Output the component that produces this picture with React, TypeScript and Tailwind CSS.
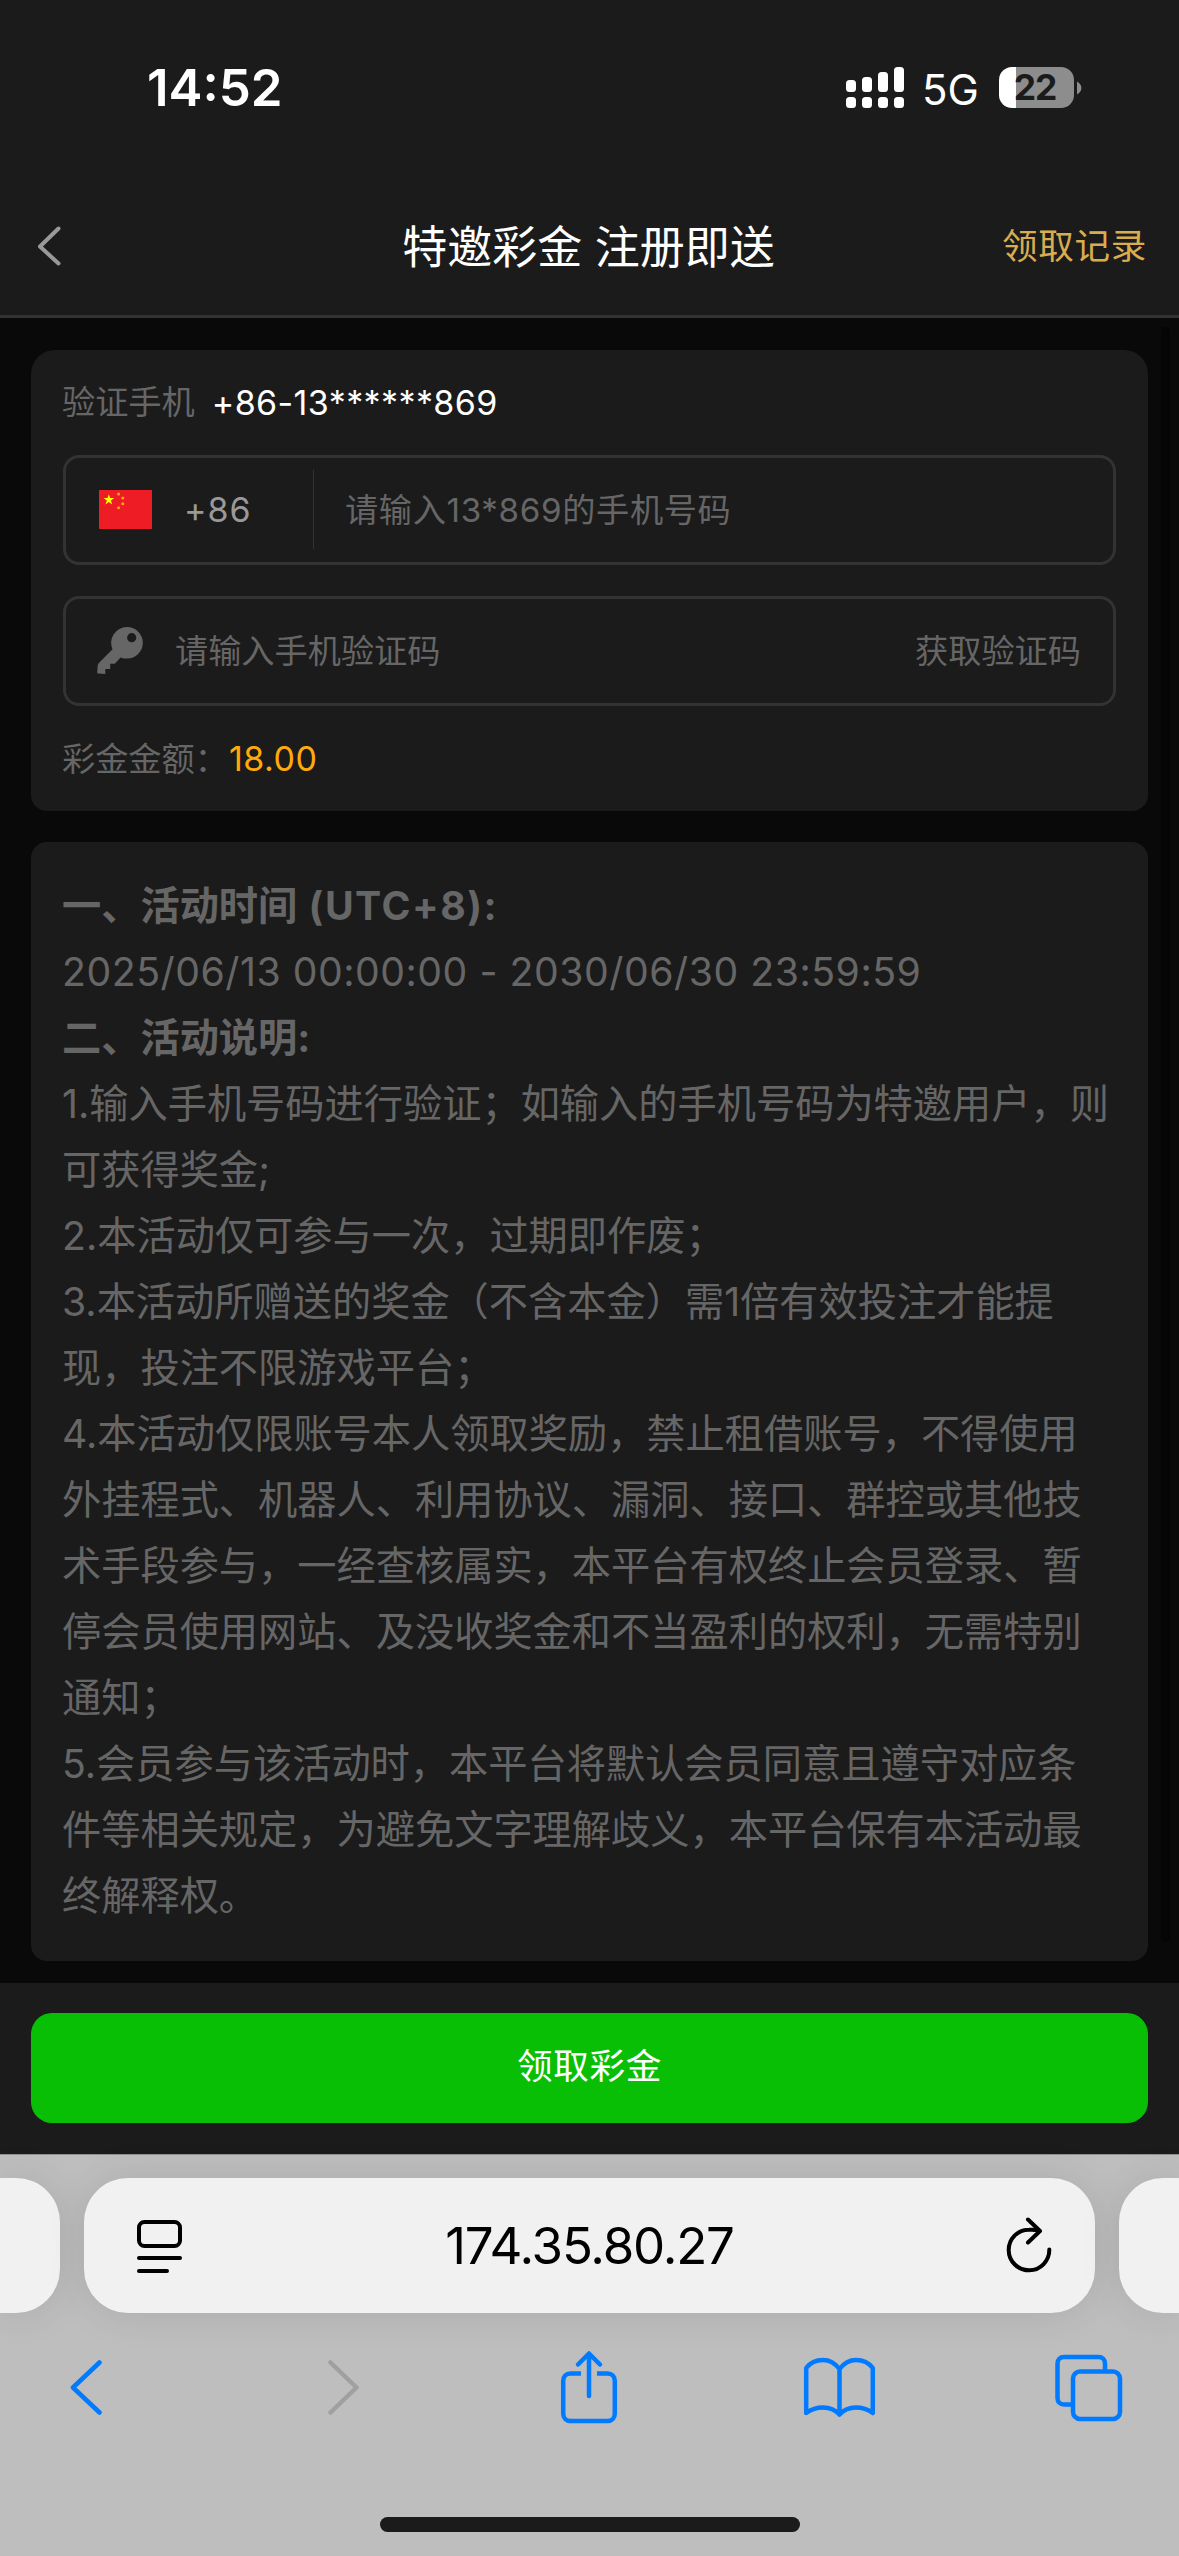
import type { ReactNode } from "react";

const rules = [
  "1.输入手机号码进行验证；如输入的手机号码为特邀用户，则可获得奖金;",
  "2.本活动仅可参与一次，过期即作废；",
  "3.本活动所赠送的奖金（不含本金）需1倍有效投注才能提现，投注不限游戏平台；",
  "4.本活动仅限账号本人领取奖励，禁止租借账号，不得使用外挂程式、机器人、利用协议、漏洞、接口、群控或其他技术手段参与，一经查核属实，本平台有权终止会员登录、暂停会员使用网站、及没收奖金和不当盈利的权利，无需特别通知；",
  "5.会员参与该活动时，本平台将默认会员同意且遵守对应条件等相关规定，为避免文字理解歧义，本平台保有本活动最终解释权。",
];

function StatusBar() {
  return (
    <div className="flex h-[177px] items-start justify-between pr-[97px] pl-[147px]">
      <span className="mt-[58px] text-[51px] leading-[60px] font-semibold text-white">14:52</span>
      <div className="mt-[67px] flex h-[41px] items-center">
        <svg width="58" height="41" viewBox="0 0 58 41" fill="#fff">
          <rect x="0" y="13" width="10" height="12" rx="3.5" />
          <rect x="16" y="10" width="10" height="15" rx="3.5" />
          <rect x="32" y="5" width="10" height="20" rx="3.5" />
          <rect x="48" y="0" width="10" height="25" rx="3.5" />
          <rect x="0" y="30" width="10" height="11" rx="3.5" />
          <rect x="16" y="30" width="10" height="11" rx="3.5" />
          <rect x="32" y="30" width="10" height="11" rx="3.5" />
          <rect x="48" y="30" width="10" height="11" rx="3.5" />
        </svg>
        <span className="mt-[4px] ml-[18px] w-[77px] text-[42px] leading-[50px] text-white">5G</span>
        <div className="flex h-[41px] w-[75px] items-center justify-center rounded-[13px] bg-[linear-gradient(90deg,#fff_17px,#8d8d8d_17px)] pr-[3px] text-[35.5px] leading-[41px] font-bold tracking-[-1px] text-[#1b1b1b]">
          22
        </div>
        <svg className="ml-[3px]" width="5" height="14" viewBox="0 0 5 14" fill="#8d8d8d">
          <path d="M0 0.5C2.6 1.8 4.4 4.2 4.4 7S2.6 12.2 0 13.5Z" />
        </svg>
      </div>
    </div>
  );
}

function NavBar() {
  return (
    <div className="flex h-[141px] items-center justify-between border-b-[3px] border-[#333] pr-[35px] pl-[37px]">
      <div className="w-[138px]">
        <svg width="24" height="42" viewBox="0 0 24 42" fill="none" stroke="#999" strokeWidth="4" strokeLinecap="round" strokeLinejoin="round">
          <path d="M21.5 3.5L3 21.5L21.5 38.5" />
        </svg>
      </div>
      <h1 className="pt-[3px] text-[45px] leading-[60px] text-white">特邀彩金 注册即送</h1>
      <span className="w-[142px] pt-[1px] text-[35.6px] leading-[50px] tracking-[0.7px] whitespace-nowrap text-[#d9ad4f]">领取记录</span>
    </div>
  );
}

function ChinaFlag() {
  return (
    <svg width="53" height="39" viewBox="0 0 53 39">
      <rect width="53" height="39" fill="#ee1c25" />
      <path fill="#ff0" d="M9.8 4.2l1.3 3.9h4.1l-3.3 2.4 1.3 3.9-3.4-2.4-3.3 2.4 1.3-3.9-3.3-2.4h4z" />
      <g fill="#f5a80f">
        <circle cx="19.6" cy="4" r="1.5" />
        <circle cx="23.8" cy="8" r="1.5" />
        <circle cx="23.8" cy="13.7" r="1.5" />
        <circle cx="19.6" cy="17.7" r="1.5" />
      </g>
    </svg>
  );
}

function KeyIcon() {
  return (
    <svg width="46" height="48" viewBox="0 0 46 48" fill="#666">
      <path
        fillRule="evenodd"
        d="M30 0A15.8 15.8 0 0 1 30 31.6C27.600 31.600 25.400 31.200 23.500 30.400L17.800 36.800H13.200V42H8.300V47L1.500 46.600C0.600 46.600 0.200 46 0.200 45.200L0.700 38.500C0.800 37.400 1.200 36.700 1.900 36L15.500 22.200A15.800 15.800 0 0 1 30 0ZM34.700 6.100A4.600 4.600 0 1 0 34.700 15.300A4.600 4.600 0 1 0 34.700 6.100Z"
      />
    </svg>
  );
}

function Field({ children }: { children: ReactNode }) {
  return <div className="flex h-[110px] items-center rounded-[16px] border-[3px] border-[#333] text-[33.2px]">{children}</div>;
}

function PhoneCard() {
  return (
    <section className="h-[461px] rounded-t-[24px] rounded-b-[16px] bg-[#1b1b1b] px-8 pt-[29px]">
      <p className="-ml-px flex h-[46px] items-center text-[33.2px] text-[#666]">
        <span className="pt-[2px]">验证手机</span>
        <span className="ml-[17px] text-[34px] tracking-[0.4px] text-white">+86-13******869</span>
      </p>
      <div className="mt-[30px]">
        <Field>
          <div className="mb-[2px] flex h-[79px] w-[248px] items-center border-r border-[#333] pl-[33px]">
            <ChinaFlag />
            <span className="ml-[32px] text-[34px] tracking-[1px] text-[#999]">+86</span>
          </div>
          <span className="ml-[31px] pt-[2px] tracking-[0.65px] text-[#666]">请输入13*869的手机号码</span>
        </Field>
      </div>
      <div className="mt-[31px]">
        <Field>
          <div className="pl-[31px]">
            <KeyIcon />
          </div>
          <span className="ml-[32px] pt-[2px] text-[#666]">请输入手机验证码</span>
          <span className="mr-[32px] ml-auto pt-[2px] text-[#666]">获取验证码</span>
        </Field>
      </div>
      <p className="mt-[30px] -ml-px flex h-[46px] items-center text-[33.2px] text-[#666]">
        <span className="pt-px">彩金金额：</span>
        <span className="ml-px pb-px text-[34px] tracking-[0.5px] text-[#ffaa0a]">18.00</span>
      </p>
    </section>
  );
}

function RulesCard() {
  return (
    <section className="mt-[31px] h-[1119px] rounded-[16px] bg-[#1b1b1b] pt-[31px] pr-9 pl-[31px] text-[39.22px] leading-[66px] text-[#666]">
      <h2 className="font-bold">
        一、活动时间 <span className="ml-[2px] tracking-[1.5px]">(UTC+8):</span>
      </h2>
      <p className="tracking-[0.52px] whitespace-nowrap">2025/06/13 00:00:00 - 2030/06/30 23:59:59</p>
      <h2 className="font-bold">二、活动说明:</h2>
      {rules.map((rule) => (
        <p key={rule}>{rule}</p>
      ))}
    </section>
  );
}

function AddressBar() {
  return (
    <div className="flex h-[135px] justify-between">
      <div className="w-[60px] rounded-r-[44px] bg-[#f1f1f1] shadow-[0_0_40px_rgba(0,0,0,0.1)]" />
      <div className="flex w-[1011px] items-center justify-between rounded-[44px] bg-[#f1f1f1] pr-[43px] pl-[52px] shadow-[0_0_40px_rgba(0,0,0,0.1)]">
        <svg width="46" height="56" viewBox="0 0 46 56" fill="none" stroke="#000" strokeWidth="4" strokeLinecap="round">
          <rect x="3" y="4" width="41" height="24" rx="5.500" />
          <path d="M3 40H44M3 53H31" />
        </svg>
        <span className="mr-[9px] text-[51px] leading-[60px] tracking-[-1.2px] text-black">174.35.80.27</span>
        <svg className="mb-[2px]" width="46" height="56" viewBox="0 0 46 56" fill="none" stroke="#000" strokeWidth="4" strokeLinecap="round" strokeLinejoin="round">
          <path d="M43.300 32.500A20.300 20.300 0 1 1 23 12.700C26.500 12.500 29.500 12.600 33 13.600" />
          <path d="M22 2.500L34 14L22 25.500" />
        </svg>
      </div>
      <div className="w-[60px] rounded-l-[44px] bg-[#f1f1f1] shadow-[0_0_40px_rgba(0,0,0,0.1)]" />
    </div>
  );
}

function Toolbar() {
  return (
    <div className="mt-[34px] flex h-[80px] items-center">
      <svg className="ml-[69px]" width="34" height="56" viewBox="0 0 34 56" fill="none" stroke="#007aff" strokeWidth="4.500" strokeLinecap="round" strokeLinejoin="round">
        <path d="M30.500 3.500L4 28.500L30.500 53.500" />
      </svg>
      <svg className="ml-[224px]" width="34" height="56" viewBox="0 0 34 56" fill="none" stroke="#a0a0a0" strokeWidth="4.500" strokeLinecap="round" strokeLinejoin="round">
        <path d="M3.500 3.500L29.500 28.500L3.500 53.500" />
      </svg>
      <svg className="ml-[199px]" width="58" height="74" viewBox="0 0 58 74" fill="none" stroke="#007aff" strokeWidth="4.500" strokeLinecap="round" strokeLinejoin="round">
        <path d="M29 46V4M18 14.500L29 3.500L40 14.500" />
        <path strokeLinecap="butt" d="M21 23.500H10.500C6 23.500 3.200 26.500 3.200 31V63.500C3.200 68 6 71 10.500 71H47.500C52 71 54.800 68 54.800 63.500V31C54.800 26.500 52 23.500 47.500 23.500H37" />
      </svg>
      <svg className="ml-[185px]" width="73" height="62" viewBox="0 0 73 62" fill="none" stroke="#007aff" strokeWidth="4.500" strokeLinecap="round" strokeLinejoin="round">
        <path d="M36.500 58.500V13C31.500 6.500 26 4 20 4C13 4 7 7 3.200 12V57C8 53.500 14 51.500 20 51.500C26 51.500 32 53.500 36.500 58.500C41 53.500 47 51.500 53 51.500C59 51.500 65 53.500 69.800 57V12C66 7 60 4 53 4C47 4 41.500 6.500 36.500 13" />
      </svg>
      <svg className="ml-[178px]" width="69" height="70" viewBox="0 0 69 70" fill="none" stroke="#007aff" strokeWidth="4.500">
        <rect x="19" y="19.500" width="47" height="47.500" rx="7" />
        <path d="M51 19.500V11.500C51 7.500 48.500 5 44.500 5H10C6 5 3.500 7.500 3.500 11.500V46C3.500 50 6 52.500 10 52.500H19" />
      </svg>
    </div>
  );
}

export default function App() {
  return (
    <div className="relative flex h-[2556px] w-[1179px] flex-col overflow-hidden bg-[#090909] font-['Inter','Noto_Sans_CJK_SC',sans-serif]">
      <header className="bg-[#1b1b1b]">
        <StatusBar />
        <NavBar />
      </header>
      <main className="h-[1665px] px-[31px] pt-8">
        <PhoneCard />
        <RulesCard />
      </main>
      <div className="absolute top-[327px] left-[1161px] h-[1615px] w-[9px] rounded-full bg-[#050505]" />
      <div className="h-[171px] bg-[#1b1b1b] px-[31px] pt-[30px]">
        <button className="block h-[110px] w-full rounded-[21px] bg-[#09bf05] pb-[3px] text-[35.6px] tracking-[0.7px] text-white">
          领取彩金
        </button>
      </div>
      <footer className="flex-1 border-t border-[#909090] bg-[#bebebe] pt-[23px]">
        <AddressBar />
        <Toolbar />
        <div className="mx-auto mt-[90px] h-[15px] w-[420px] rounded-full bg-[#1b1b1b]" />
      </footer>
    </div>
  );
}
